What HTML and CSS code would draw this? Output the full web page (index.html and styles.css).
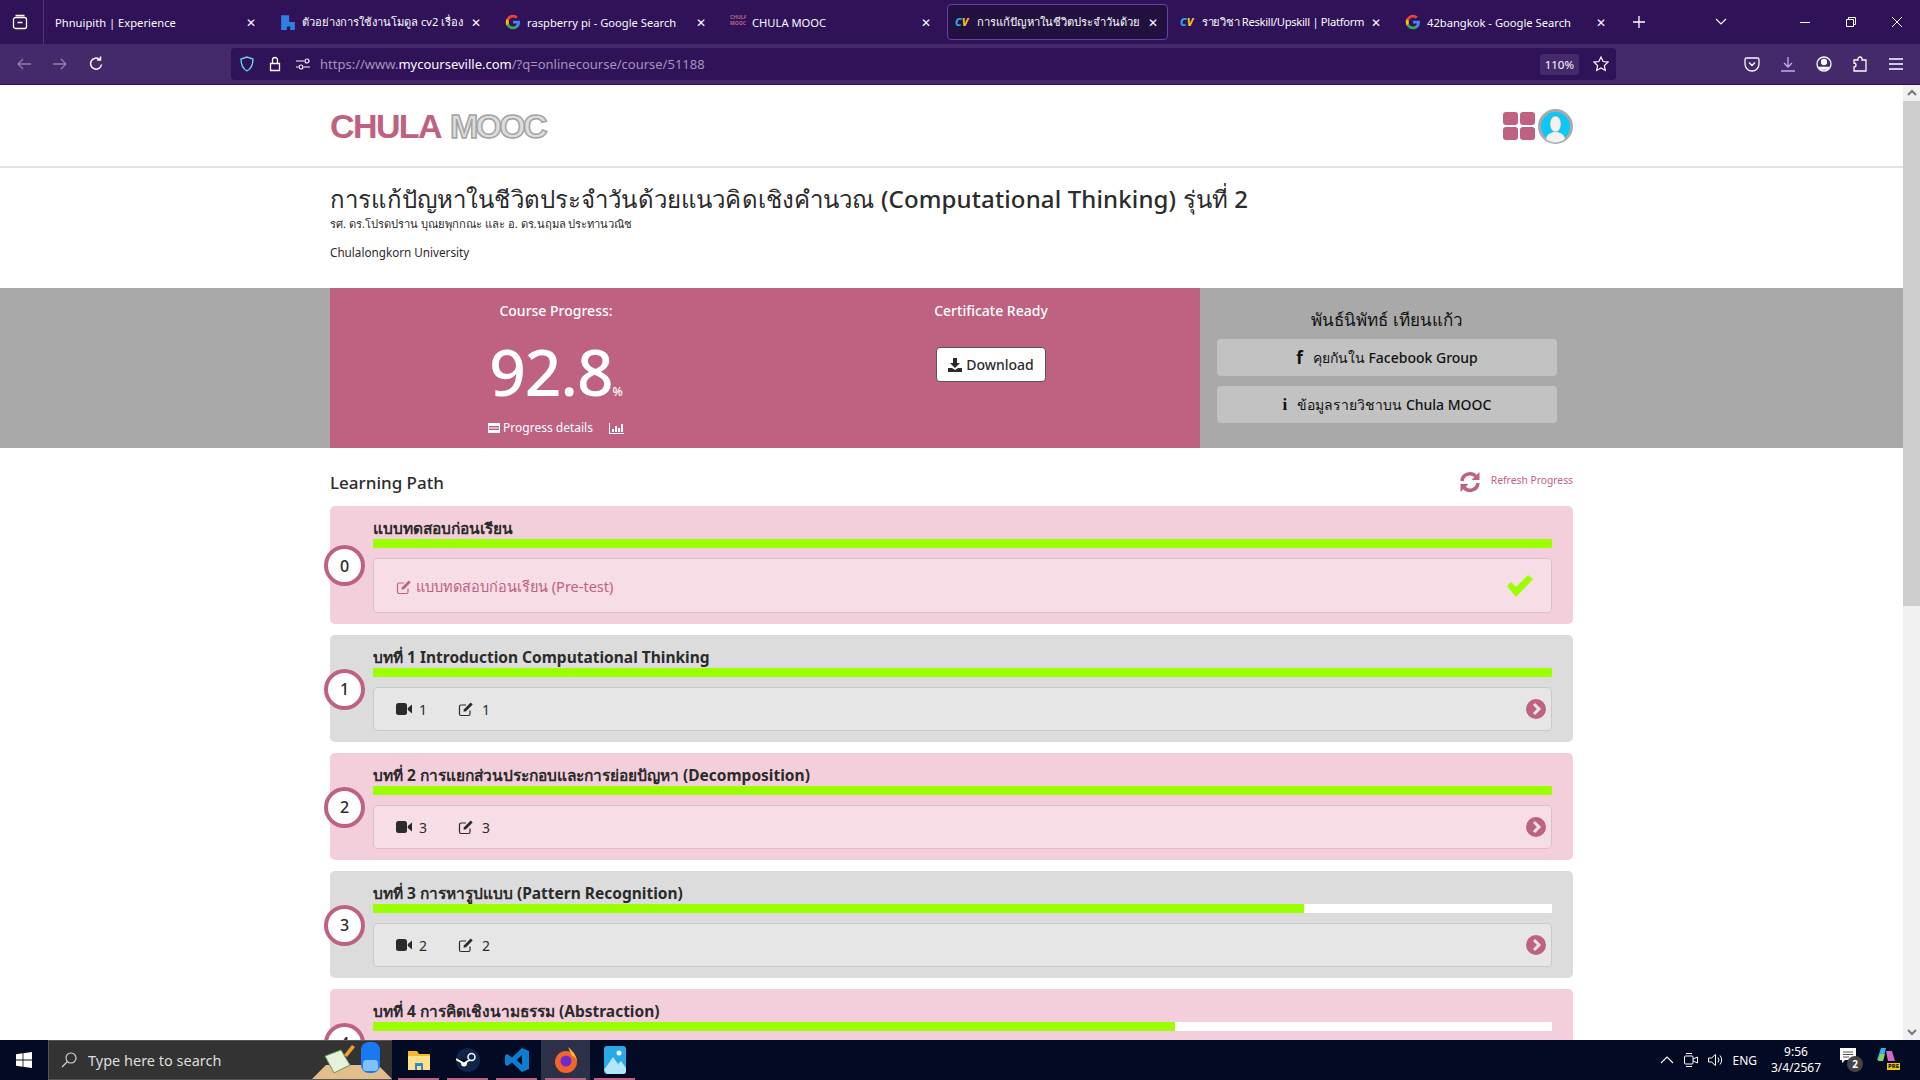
FILE: index.html
```html
<!DOCTYPE html>
<html lang="th">
  <head>
    <meta charset="UTF-8" />
    <title>Chula MOOC</title>
    <link rel="stylesheet" href="styles.css">
  </head>
  <body>
    <svg class="defs" width="0" height="0">
      <symbol id="g-logo" viewBox="0 0 48 48">
        <path fill="#4285f4" d="M45 24.500c0-1.600-.1-3.100-.4-4.500H24v8.500h11.800c-.5 2.700-2.100 5-4.400 6.600v5.500h7.100C42.700 36.700 45 31.100 45 24.500z"/>
        <path fill="#34a853" d="M24 46c5.900 0 10.900-2 14.500-5.400l-7.100-5.500c-2 1.300-4.500 2.100-7.400 2.100-5.700 0-10.500-3.800-12.200-9H4.500v5.700C8.100 41 15.500 46 24 46z"/>
        <path fill="#fbbc05" d="M11.800 28.700c-.9-2.700-.9-5.600 0-8.300v-5.700H4.500c-3 6-3 13.700 0 19.700z"/>
        <path fill="#ea4335" d="M24 10.800c3.200 0 6.100 1.100 8.300 3.300l6.300-6.300C34.900 4.200 29.900 2 24 2 15.500 2 8.100 7 4.500 14.700l7.300 5.700c1.700-5.200 6.500-9.600 12.200-9.600z"/>
      </symbol>
      <symbol id="edit" viewBox="0 0 16 16">
        <path fill="none" stroke="currentColor" stroke-width="1.200" d="M12 9.500V13a1.500 1.500 0 0 1-1.500 1.500H3A1.500 1.500 0 0 1 1.500 13V5.500A1.500 1.500 0 0 1 3 4h5"/>
        <path fill="currentColor" d="M6 8.200 12.700 1.500l2 2L8 10.200l-2.500.5z"/>
      </symbol>
      <symbol id="video" viewBox="0 0 16 12">
        <rect width="11" height="12" rx="2.500" fill="currentColor"/>
        <path fill="currentColor" d="m11.800 5 4.200-3.500v9L11.800 7z"/>
      </symbol>
      <symbol id="next" viewBox="0 0 20 20">
        <circle cx="10" cy="10" r="10" fill="#bf6180"/>
        <path fill="none" stroke="#e5e5e5" stroke-width="3" d="m8 5 5 5-5 5"/>
      </symbol>
    </svg>

    <div class="tabbar">
      <div class="tab-menu">
        <svg width="16" height="16" viewBox="0 0 16 16" fill="none" stroke="#fff" stroke-width="1.300"><path d="M3.500 1.500h9M1.500 5.500a2 2 0 0 1 2-2h9a2 2 0 0 1 2 2v7a2 2 0 0 1-2 2h-9a2 2 0 0 1-2-2zM5.500 8.500h5"/></svg>
      </div>
      <div class="tab">
        <span class="tab-title">Phnuipith | Experience</span><span class="tab-x">✕</span>
      </div>
      <div class="tab">
        <svg class="favicon" viewBox="0 0 14 14"><path fill="#2f7fe6" d="M1 1h7v6h5v7H9v-3H6v3H1z"/></svg>
        <span class="tab-title">ตัวอย่างการใช้งานโมดูล cv2 เรื่อง</span><span class="tab-x">✕</span>
      </div>
      <div class="tab">
        <svg class="favicon"><use href="#g-logo"/></svg>
        <span class="tab-title">raspberry pi - Google Search</span><span class="tab-x">✕</span>
      </div>
      <div class="tab">
        <span class="favicon favicon-mooc">CHULA MOOC</span>
        <span class="tab-title">CHULA MOOC</span><span class="tab-x">✕</span>
      </div>
      <div class="tab tab-active">
        <span class="favicon favicon-cv"><span>C</span>V</span>
        <span class="tab-title">การแก้ปัญหาในชีวิตประจำวันด้วย</span><span class="tab-x">✕</span>
      </div>
      <div class="tab">
        <span class="favicon favicon-cv"><span>C</span>V</span>
        <span class="tab-title tab-tight">รายวิชา Reskill/Upskill | Platform</span><span class="tab-x">✕</span>
      </div>
      <div class="tab">
        <svg class="favicon"><use href="#g-logo"/></svg>
        <span class="tab-title">42bangkok - Google Search</span><span class="tab-x">✕</span>
      </div>
      <div class="tab-plus">
        <svg width="12" height="12" viewBox="0 0 12 12" stroke="#fff" stroke-width="1.300"><path d="M6 0v12M0 6h12"/></svg>
      </div>
      <div class="tab-list">
        <svg width="12" height="8" viewBox="0 0 12 8" fill="none" stroke="#fff" stroke-width="1.200"><path d="m1 1 5 5 5-5"/></svg>
      </div>
      <div class="win-controls">
        <svg width="10" height="10" viewBox="0 0 10 10" stroke="#fff"><path d="M0 5.500h10"/></svg>
        <svg width="10" height="10" viewBox="0 0 10 10" fill="none" stroke="#fff"><path d="M.5 2.500h7v7h-7zM2.500 2.500v-2h7v7h-2"/></svg>
        <svg width="10" height="10" viewBox="0 0 10 10" stroke="#fff"><path d="m0 0 10 10M10 0 0 10"/></svg>
      </div>
    </div>

    <div class="navbar">
      <svg class="nav-icon nav-dim" viewBox="0 0 16 16" fill="none" stroke="currentColor" stroke-width="1.300"><path d="M15 8H2M7 3 2 8l5 5"/></svg>
      <svg class="nav-icon nav-dim" viewBox="0 0 16 16" fill="none" stroke="currentColor" stroke-width="1.300"><path d="M1 8h13M9 3l5 5-5 5"/></svg>
      <svg class="nav-icon" viewBox="0 0 16 16" fill="none" stroke="currentColor" stroke-width="1.500"><path d="M13.500 8.500a5.500 5.500 0 1 1-1.800-5M12.500 0.500v3.500H9"/></svg>
      <div class="urlbar">
        <svg class="url-icon" viewBox="0 0 16 16" fill="none" stroke="#6fd0f5" stroke-width="1.400"><path d="M8 1 2 3c0 6 1.500 9.500 6 12 4.500-2.500 6-6 6-12z"/></svg>
        <svg class="url-icon" viewBox="0 0 16 16" fill="none" stroke="#fbfbfe" stroke-width="1.300"><path d="M3.500 7.500h9v7h-9zM5.500 7.500V4a2.500 2.500 0 0 1 5 0v3.500"/></svg>
        <svg class="url-icon" viewBox="0 0 16 16" fill="none" stroke="#fbfbfe" stroke-width="1.200"><path d="M1 5h8M1 11h2M9 11h6"/><circle cx="12" cy="5" r="2"/><circle cx="6" cy="11" r="2"/></svg>
        <div class="url-text">https://www.<b>mycourseville.com</b>/?q=onlinecourse/course/51188</div>
        <div class="url-zoom">110%</div>
        <svg class="url-star" viewBox="0 0 16 16" fill="none" stroke="#fbfbfe" stroke-width="1.200"><path d="m8 1 2.100 4.500 4.900.6-3.600 3.400.9 4.900L8 11.900l-4.300 2.500.9-4.900L1 6.100l4.900-.6z"/></svg>
      </div>
      <div class="nav-tools">
        <svg class="nav-icon" viewBox="0 0 16 16" fill="none" stroke="currentColor" stroke-width="1.300"><path d="M2.500 2h11A1.500 1.500 0 0 1 15 3.500V8a7 7 0 0 1-14 0V3.500A1.500 1.500 0 0 1 2.500 2zM5 6.500l3 3 3-3"/></svg>
        <svg class="nav-icon nav-purple" viewBox="0 0 16 16" fill="none" stroke="currentColor" stroke-width="1.300"><path d="M8 1v10M4 7l4 4 4-4M1 15h14"/></svg>
        <svg class="nav-icon" viewBox="0 0 16 16" fill="none" stroke="currentColor" stroke-width="1.300"><circle cx="8" cy="8" r="7"/><circle cx="8" cy="6" r="2.500" fill="currentColor"/><path fill="currentColor" d="M3.500 11.500h9v1.500h-9z"/></svg>
        <svg class="nav-icon" viewBox="0 0 16 16" fill="none" stroke="currentColor" stroke-width="1.300"><path d="M6 15H2v-4a2 2 0 0 0 0-4V4h4V3a2 2 0 0 1 4 0v1h4v11z"/></svg>
        <svg class="nav-icon" viewBox="0 0 16 16" stroke="currentColor" stroke-width="1.300"><path d="M1 3h14M1 8h14M1 13h14"/></svg>
      </div>
    </div>

    <div class="viewport">
      <div class="page">
        <header class="site-header">
          <div class="container header-row">
            <div class="logo"><span class="logo-chula">CHULA</span><span class="logo-mooc">MOOC</span></div>
            <div class="header-tools">
              <div class="apps"><i></i><i></i><i></i><i></i></div>
              <svg class="avatar" viewBox="0 0 35 35">
                <circle cx="17.500" cy="17.500" r="16" fill="#0cc8f8" stroke="#a9a9a9" stroke-width="3"/>
                <path fill="#f2f2f2" d="M8 30c1-5 5-7 9.500-7s8.500 2 9.500 7a15 15 0 0 1-19 0z"/>
                <ellipse cx="17.500" cy="15" rx="5.500" ry="8" fill="#f4f1ec" stroke="#888" stroke-width=".4"/>
              </svg>
            </div>
          </div>
        </header>

        <section class="container course-head">
          <h1>การแก้ปัญหาในชีวิตประจำวันด้วยแนวคิดเชิงคำนวณ (Computational Thinking) รุ่นที่ 2</h1>
          <p class="teacher">รศ. ดร.โปรดปราน บุณยพุกกณะ และ อ. ดร.นฤมล ประทานวณิช</p>
          <p class="school">Chulalongkorn University</p>
        </section>

        <section class="hero">
          <div class="container hero-row">
            <div class="hero-main">
              <div class="stat">
                <div class="stat-title">Course Progress:</div>
                <div class="stat-value">92.8<small>%</small></div>
                <div class="stat-links">
                  <svg width="12" height="10" viewBox="0 0 12 10" fill="#fff"><path d="M0 0h12v10H0zm1 3v1.500h10V3zm0 2.500V7h10V5.500z"/></svg>
                  <span>Progress details</span>
                  <svg class="chart" width="15" height="11" viewBox="0 0 15 11" fill="#fff"><path d="M0 0h1v10h14v1H0zM3 6h2v3H3zM6 3h2v6H6zM9 5h2v4H9zM12 1h2v8h-2z"/></svg>
                </div>
              </div>
              <div class="stat cert">
                <div class="stat-title">Certificate Ready</div>
                <button class="download">
                  <svg width="14" height="14" viewBox="0 0 14 14" fill="#2b2b2b"><path d="M5 0h4v5h3L7 10 2 5h3zM0 10h4l3 2 3-2h4v4H0z"/></svg>
                  Download
                </button>
              </div>
            </div>
            <div class="hero-side">
              <div class="side-name">พันธ์นิพัทธ์ เทียนแก้ว</div>
              <a class="side-btn"><b class="side-glyph">f</b> คุยกันใน Facebook Group</a>
              <a class="side-btn"><b class="side-glyph side-serif">i</b> ข้อมูลรายวิชาบน Chula MOOC</a>
            </div>
          </div>
        </section>

        <section class="container path">
          <div class="path-head">
            <h2>Learning Path</h2>
            <div class="refresh">
              <svg width="22" height="22" viewBox="0 0 22 22" fill="none" stroke="#bf6180" stroke-width="3.500"><path d="M3 10a8 8 0 0 1 14-4.500M19 12a8 8 0 0 1-14 4.500"/><path fill="#bf6180" stroke="none" d="M20.500 1v8h-8zM1.500 21v-8h8z"/></svg>
              <span>Refresh Progress</span>
            </div>
          </div>

          <article class="unit unit-pink">
            <div class="unit-no">0</div>
            <h3>แบบทดสอบก่อนเรียน</h3>
            <div class="bar"><div class="bar-fill" style="width: 100%"></div></div>
            <div class="unit-box unit-box-tall">
              <span class="pretest"><svg class="ic-edit"><use href="#edit"/></svg> แบบทดสอบก่อนเรียน (Pre-test)</span>
              <svg class="check" width="28" height="22" viewBox="0 0 28 22"><path fill="#9cff00" d="m1 11 4-4 5 5L22 0l5 4-17 18z"/></svg>
            </div>
          </article>

          <article class="unit unit-gray">
            <div class="unit-no">1</div>
            <h3>บทที่ 1 Introduction Computational Thinking</h3>
            <div class="bar"><div class="bar-fill" style="width: 100%"></div></div>
            <div class="unit-box">
              <span class="counts"><svg class="ic-video"><use href="#video"/></svg>1<svg class="ic-edit ic-gap"><use href="#edit"/></svg>1</span>
              <svg class="next"><use href="#next"/></svg>
            </div>
          </article>

          <article class="unit unit-pink">
            <div class="unit-no">2</div>
            <h3>บทที่ 2 การแยกส่วนประกอบและการย่อยปัญหา (Decomposition)</h3>
            <div class="bar"><div class="bar-fill" style="width: 100%"></div></div>
            <div class="unit-box">
              <span class="counts"><svg class="ic-video"><use href="#video"/></svg>3<svg class="ic-edit ic-gap"><use href="#edit"/></svg>3</span>
              <svg class="next"><use href="#next"/></svg>
            </div>
          </article>

          <article class="unit unit-gray">
            <div class="unit-no">3</div>
            <h3>บทที่ 3 การหารูปแบบ (Pattern Recognition)</h3>
            <div class="bar"><div class="bar-fill" style="width: 79%"></div></div>
            <div class="unit-box">
              <span class="counts"><svg class="ic-video"><use href="#video"/></svg>2<svg class="ic-edit ic-gap"><use href="#edit"/></svg>2</span>
              <svg class="next"><use href="#next"/></svg>
            </div>
          </article>

          <article class="unit unit-pink">
            <div class="unit-no">4</div>
            <h3>บทที่ 4 การคิดเชิงนามธรรม (Abstraction)</h3>
            <div class="bar"><div class="bar-fill" style="width: 68%"></div></div>
            <div class="unit-box">
              <span class="counts"><svg class="ic-video"><use href="#video"/></svg>2<svg class="ic-edit ic-gap"><use href="#edit"/></svg>2</span>
              <svg class="next"><use href="#next"/></svg>
            </div>
          </article>
        </section>
      </div>

      <div class="scrollbar">
        <svg class="scroll-arrow" width="16" height="16" viewBox="0 0 16 16" fill="none" stroke="#777" stroke-width="2"><path d="m4 10 4-4 4 4"/></svg>
        <div class="scroll-thumb"></div>
        <div class="scroll-track"></div>
        <svg class="scroll-arrow" width="16" height="16" viewBox="0 0 16 16" fill="none" stroke="#777" stroke-width="2"><path d="m4 6 4 4 4-4"/></svg>
      </div>
    </div>

    <div class="taskbar">
      <div class="start">
        <svg width="16" height="16" viewBox="0 0 16 16" fill="#fff"><path d="M0 2.200 6.600 1.300v6.300H0zM7.400 1.200 16 0v7.600H7.400zM0 8.400h6.600v6.300L0 13.800zM7.400 8.400H16V16l-8.600-1.200z"/></svg>
      </div>
      <div class="search">
        <svg width="16" height="16" viewBox="0 0 16 16" fill="none" stroke="#ddd" stroke-width="1.100"><circle cx="10" cy="6" r="5"/><path d="M6.500 9.500 1 15"/></svg>
        <span>Type here to search</span>
        <svg class="search-art" width="80" height="40" viewBox="0 0 80 40">
          <path fill="#e4bd8c" d="M0 40 14 26h52l14 14z"/>
          <path fill="#e8f0dc" stroke="#5c9a5a" d="M13 17 29 11l9 15-16 8z"/>
          <path fill="#f3a02e" d="m32 16 8-10 3 2-8 10z"/>
          <rect x="49" y="3" width="19" height="31" rx="8" fill="#1979f2"/>
          <rect x="51" y="21" width="15" height="11" rx="3" fill="#7fc1fb"/>
        </svg>
      </div>
      <div class="task-icons">
        <div class="task-item">
          <svg width="22" height="20" viewBox="0 0 22 20"><path fill="#f5b921" d="M0 1h9l2 3h11v16H0z"/><path fill="#fde08a" d="M0 6h22v14H0z"/><path fill="#2a8ad4" d="M7 13h8v7h-2v-4H9v4H7z"/></svg>
        </div>
        <div class="task-item">
          <svg width="24" height="24" viewBox="0 0 24 24"><circle cx="12" cy="12" r="12" fill="#10254a"/><circle cx="15.500" cy="9" r="3.500" fill="none" stroke="#fff" stroke-width="1.500"/><circle cx="8" cy="15.500" r="3" fill="#fff"/><path stroke="#fff" stroke-width="2" d="m0 11 8 4.500 6-4"/></svg>
        </div>
        <div class="task-item">
          <svg width="24" height="24" viewBox="0 0 24 24"><path fill="#0a7fd0" d="M17 0 24 3v18l-7 3-10-9.500L2.500 18 0 16.500V7.500L2.500 6 7 9.500zM17 7l-5.500 5 5.500 5z"/></svg>
        </div>
        <div class="task-item task-active">
          <svg width="24" height="26" viewBox="0 0 24 26"><circle cx="12" cy="15" r="11" fill="#f2642a"/><path fill="#ffb52e" d="M14 0c5 4 9 9 9 15 0-3-3-6-5-6z"/><circle cx="12" cy="14" r="5.500" fill="#6b2bd0"/></svg>
        </div>
        <div class="task-item">
          <svg width="22" height="28" viewBox="0 0 22 28"><rect width="22" height="28" rx="3" fill="#2aa8e8"/><circle cx="15" cy="7" r="2.500" fill="#fff"/><path fill="#b3e6fb" d="m0 24 9-13 5 7 3-3 5 7v3a3 3 0 0 1-3 3H3z"/></svg>
        </div>
      </div>
      <div class="tray">
        <svg width="14" height="8" viewBox="0 0 14 8" fill="none" stroke="#fff" stroke-width="1.100"><path d="m1 7 6-6 6 6"/></svg>
        <svg width="14" height="16" viewBox="0 0 14 16" fill="none" stroke="#fff"><rect x=".5" y="4" width="8.500" height="8" rx="1"/><path d="m9 7 4.500-2v6L9 9M2 1.500h6M2 14.500h6"/></svg>
        <svg width="16" height="14" viewBox="0 0 16 14" fill="none" stroke="#fff"><path d="M.5 5v4h3l4 3.500v-11l-4 3.500zM10 4.500a4 4 0 0 1 0 5M12 2.500a7 7 0 0 1 0 9"/></svg>
        <span class="tray-lang">ENG</span>
        <div class="clock"><span>9:56</span><span>3/4/2567</span></div>
        <div class="notify">
          <svg width="16" height="15" viewBox="0 0 16 15"><path fill="#fff" d="M0 0h16v12H5l-3 3v-3H0z"/><path stroke="#555" d="M3 4h10M3 6.500h10M3 9h6"/></svg>
          <span class="notify-badge">2</span>
        </div>
        <div class="copilot">
          <svg width="20" height="16" viewBox="0 0 20 16"><path fill="#2bb5e8" d="M5 0h5L7 12H1z"/><path fill="#d664c9" d="M10 3h6l3 10h-7z"/><path fill="#8ad05a" d="M4 6h5l-2 7H2z"/></svg>
          <span class="copilot-tag">PRE</span>
        </div>
      </div>
    </div>
  </body>
</html>
```

FILE: styles.css
```css
* {
  box-sizing: border-box;
}

html,
body {
  height: 100%;
}

body {
  margin: 0;
  display: flex;
  flex-direction: column;
  overflow: hidden;
  font-family: "Noto Sans", "Noto Sans CJK SC", sans-serif;
  color: #2b2b2b;
  background: #fff;
}

.defs {
  position: absolute;
}

/* browser tabs */
.tabbar {
  height: 44px;
  flex: none;
  display: flex;
  align-items: center;
  background: #2f1257;
  color: #fbfbfe;
  font-size: 11.200px;
}

.tab-menu {
  width: 44px;
  height: 44px;
  display: flex;
  align-items: center;
  justify-content: center;
  padding-right: 4px;
  border-right: 1px solid #4f3576;
}

.tab {
  width: 225px;
  height: 36px;
  display: flex;
  align-items: center;
  gap: 6px;
  padding: 0 12px 0 10px;
  border: 1px solid transparent;
  border-radius: 4px;
}

.tab-active {
  width: 221px;
  margin: 0 1px 0 3px;
  padding: 0 9px 0 7px;
  background: #22113f;
  border-color: #6a40ad;
}

.tab-title {
  flex: 1;
  min-width: 0;
  overflow: hidden;
  white-space: nowrap;
}

.tab-tight {
  letter-spacing: -0.3px;
}

.tab-x {
  flex: none;
  font-size: 12px;
}

.favicon {
  flex: none;
  width: 16px;
  height: 16px;
}

.favicon-mooc {
  font-size: 5px;
  line-height: 6px;
  color: #bf6180;
  font-weight: 700;
  overflow: hidden;
}

.favicon-cv {
  font-size: 11px;
  line-height: 16px;
  font-weight: 800;
  font-style: italic;
  color: #f5c518;
}

.favicon-cv span {
  color: #2aa8e8;
}

.tab-plus {
  width: 40px;
  display: flex;
  justify-content: center;
}

.tab-list {
  margin-left: 42px;
  width: 40px;
  display: flex;
  justify-content: center;
}

.win-controls {
  margin-left: auto;
  display: flex;
  gap: 36px;
  padding-right: 18px;
}

/* address bar */
.navbar {
  height: 41px;
  flex: none;
  display: flex;
  align-items: center;
  gap: 20px;
  padding: 0 10px 0 16px;
  background: #452a6b;
  border-bottom: 1px solid #2f1257;
  color: #fbfbfe;
}

.nav-icon {
  width: 16px;
  height: 16px;
  flex: none;
}

.nav-dim {
  color: #8f7fa8;
}

.nav-purple {
  color: #c9a8f5;
}

.urlbar {
  width: 1385px;
  height: 32px;
  margin-left: 107px;
  display: flex;
  align-items: center;
  gap: 12px;
  padding: 0 4px 0 8px;
  background: #2f1257;
  border-radius: 4px;
  font-size: 13px;
}

.url-icon {
  width: 16px;
  height: 16px;
  flex: none;
}

.url-text {
  flex: 1;
  margin-left: -3px;
  color: #a594bd;
  white-space: nowrap;
}

.url-text b {
  font-weight: 400;
  color: #fbfbfe;
}

.url-zoom {
  padding: 3px 5px;
  background: #452a6b;
  border-radius: 3px;
  font-size: 11.500px;
}

.url-star {
  width: 16px;
  height: 16px;
  margin: 0 3px 0 2px;
}

.nav-tools {
  display: flex;
  gap: 20px;
  margin-left: 108px;
}

/* page area */
.viewport {
  flex: 1;
  min-height: 0;
  display: flex;
}

.page {
  flex: 1;
  min-width: 0;
  overflow: hidden;
}

.container {
  width: 1243px;
  margin-left: 330px;
}

.site-header {
  height: 83px;
  border-bottom: 2px solid #e4e4e4;
}

.header-row {
  height: 100%;
  display: flex;
  align-items: center;
  justify-content: space-between;
}

.logo {
  display: flex;
  align-items: center;
  gap: 9px;
  padding-top: 0;
  font-family: "Liberation Sans", sans-serif;
  font-weight: 700;
  font-size: 34px;
  line-height: 40px;
}

.logo-chula {
  color: #bf6180;
  letter-spacing: -1.600px;
}

.logo-mooc {
  color: #ddd;
  -webkit-text-stroke: 1.500px #a3a3a3;
  letter-spacing: -2.700px;
}

.header-tools {
  display: flex;
  align-items: center;
  gap: 3px;
  padding-top: 1px;
}

.apps {
  display: grid;
  grid-template-columns: 15px 15px;
  grid-auto-rows: 13px;
  gap: 2px;
}

.apps i {
  background: #bf6180;
  border-radius: 3px;
}

.avatar {
  width: 35px;
  height: 35px;
  display: block;
}

.course-head {
  height: 120px;
  padding-top: 15px;
}

.course-head h1 {
  margin: 0;
  font-size: 24px;
  line-height: 32px;
  font-weight: 500;
  letter-spacing: 0.13px;
  white-space: nowrap;
}

.teacher,
.school {
  margin: 0;
  line-height: 16px;
}

.teacher {
  margin-top: 1px;
  font-size: 11.200px;
}

.school {
  margin-top: 12px;
  font-size: 11.700px;
}

/* progress band */
.hero {
  height: 160px;
  background: #a9a9a9;
}

.hero-row {
  height: 100%;
  display: flex;
}

.hero-main {
  width: 870px;
  display: flex;
  background: #bf6180;
  color: #fff;
}

.stat {
  width: 452px;
  padding-top: 13px;
  display: flex;
  flex-direction: column;
  align-items: center;
}

.cert {
  width: 418px;
}

.stat-title {
  font-size: 14px;
  line-height: 20px;
  font-weight: 500;
}

.stat-value {
  margin-top: 23px;
  font-size: 64px;
  line-height: 56px;
  font-weight: 500;
  letter-spacing: -1px;
}

.stat-value small {
  font-size: 12px;
  letter-spacing: 0;
}

.stat-links {
  margin-top: -1px;
  display: flex;
  align-items: center;
  gap: 3px;
  font-size: 12px;
  line-height: 18px;
}

.chart {
  margin-left: 13px;
}

.download {
  margin-top: 26px;
  width: 110px;
  height: 35px;
  display: flex;
  align-items: center;
  justify-content: center;
  gap: 4px;
  padding: 0;
  background: #fff;
  border: 1px solid #555;
  border-radius: 4px;
  font: inherit;
  font-size: 14px;
  font-weight: 500;
  color: #2b2b2b;
}

.hero-side {
  width: 340px;
  margin-left: 17px;
  padding-top: 17px;
  color: #111;
}

.side-name {
  height: 34px;
  text-align: center;
  font-size: 17px;
  line-height: 30px;
  font-weight: 500;
}

.side-btn {
  height: 37px;
  margin-bottom: 10px;
  display: flex;
  align-items: center;
  justify-content: center;
  gap: 10px;
  background: #c2c2c2;
  border-radius: 4px;
  font-size: 14px;
  font-weight: 500;
}

.side-glyph {
  font-size: 17px;
}

.side-serif {
  font-family: "Liberation Serif", serif;
}

/* learning path */
.path-head {
  height: 58px;
  padding-top: 23px;
  display: flex;
  justify-content: space-between;
}

.path-head h2 {
  margin: 0;
  font-size: 17px;
  line-height: 24px;
  font-weight: 500;
}

.refresh {
  display: flex;
  align-items: flex-start;
  gap: 10px;
  height: 24px;
  font-size: 10.300px;
  line-height: 18px;
  color: #bf6180;
}

.unit {
  position: relative;
  margin-bottom: 11px;
  padding: 9px 21px 11px 43px;
  border-radius: 5px;
}

.unit-pink {
  background: #f3cfdb;
}

.unit-gray {
  background: #dcdcdc;
}

.unit-no {
  position: absolute;
  left: -6px;
  top: 50%;
  width: 41px;
  height: 41px;
  margin-top: -20px;
  display: flex;
  align-items: center;
  justify-content: center;
  background: #fff;
  border: 4.500px solid #bf6180;
  border-radius: 50%;
  font-size: 16px;
  font-weight: 500;
}

.unit h3 {
  margin: 0;
  height: 24px;
  font-size: 15.500px;
  line-height: 26px;
  font-weight: 700;
  white-space: nowrap;
}

.bar {
  height: 9px;
  background: #fff;
  border-radius: 1px;
}

.bar-fill {
  height: 100%;
  background: #9cff00;
}

.unit-box {
  height: 44px;
  margin-top: 10px;
  display: flex;
  align-items: center;
  justify-content: space-between;
  padding: 0 5px 0 22px;
  border: 1px solid rgba(0, 0, 0, 0.13);
  border-radius: 5px;
  background: rgba(255, 255, 255, 0.3);
  font-size: 14px;
}

.unit-box-tall {
  height: 55px;
  padding-right: 17px;
}

.pretest {
  display: flex;
  align-items: center;
  gap: 4px;
  padding-top: 2px;
  color: #bf6180;
  font-size: 14.500px;
}

.counts {
  display: flex;
  align-items: center;
}

.ic-edit {
  width: 16px;
  height: 16px;
}

.ic-video {
  width: 16px;
  height: 12px;
  margin-right: 7px;
}

.ic-gap {
  margin-left: 31px;
  margin-right: 8px;
}

.next {
  width: 20px;
  height: 20px;
}

.scrollbar {
  width: 17px;
  flex: none;
  display: flex;
  flex-direction: column;
  background: #f0f0f0;
}

.scroll-thumb {
  height: 505px;
  background: #cdcdcd;
}

.scroll-track {
  flex: 1;
}

.scroll-arrow {
  flex: none;
  margin-left: 1px;
}

/* windows taskbar */
.taskbar {
  height: 40px;
  flex: none;
  display: flex;
  align-items: center;
  background: #030a24;
  color: #fff;
}

.start {
  width: 48px;
  display: flex;
  justify-content: center;
}

.search {
  width: 344px;
  height: 40px;
  display: flex;
  align-items: center;
  gap: 11px;
  padding-left: 12px;
  background: #333;
  border: 1px solid #555;
  border-width: 1px 0 1px 1px;
  font-size: 14.500px;
  color: #ddd;
  position: relative;
}

.search-art {
  position: absolute;
  right: 0;
  bottom: 0;
}

.task-icons {
  display: flex;
  margin-left: 2px;
}

.task-item {
  width: 49px;
  height: 40px;
  display: flex;
  align-items: center;
  justify-content: center;
  position: relative;
}

.task-item::after {
  content: "";
  position: absolute;
  left: 4px;
  right: 4px;
  bottom: 0;
  height: 2px;
  background: #bf6180;
}

.task-active {
  background: #2b3148;
}

.tray {
  margin-left: auto;
  display: flex;
  align-items: center;
  font-size: 12px;
}

.tray svg {
  display: block;
}

.tray > svg {
  margin-right: 10px;
}

.tray-lang {
  margin-left: -2px;
}

.clock {
  width: 60px;
  margin-left: 9px;
  display: flex;
  flex-direction: column;
  align-items: center;
  line-height: 16px;
}

.notify {
  position: relative;
  margin-left: 14px;
  width: 24px;
  height: 24px;
}

.notify-badge {
  position: absolute;
  left: 7px;
  top: 8px;
  width: 16px;
  height: 16px;
  display: flex;
  align-items: center;
  justify-content: center;
  background: #444;
  border-radius: 50%;
  font-size: 10px;
  font-weight: 700;
}

.copilot {
  position: relative;
  width: 24px;
  height: 24px;
  margin: 0 20px 0 12px;
}

.copilot-tag {
  position: absolute;
  right: 0;
  bottom: 2px;
  padding: 0 1px;
  background: #f5c518;
  color: #111;
  font-size: 6px;
  line-height: 7px;
  font-weight: 800;
}
```
